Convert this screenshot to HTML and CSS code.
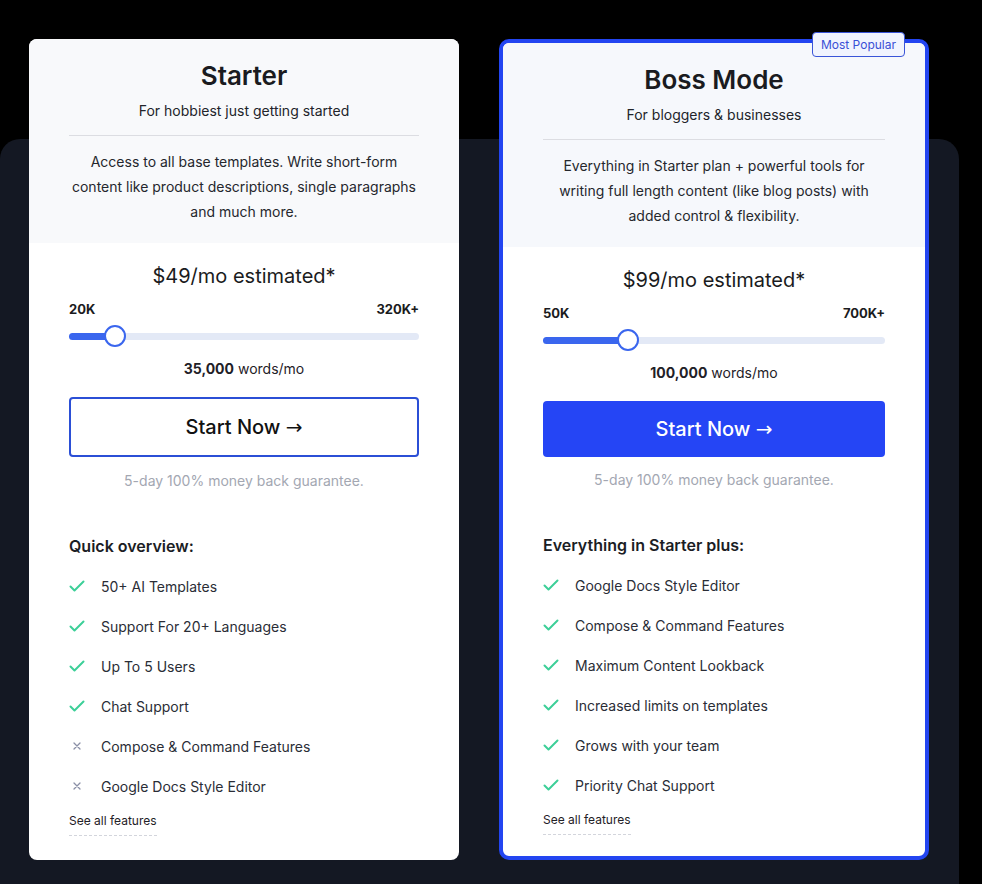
FILE: index.html
```html
<!DOCTYPE html>
<html lang="en">
<head>
    <meta charset="UTF-8">
    <meta name="viewport" content="width=device-width, initial-scale=1.0">
    <title>Pricing</title>
    <link rel="stylesheet" href="styles.css">
</head>
<body>
    <div class="panel">
        <div class="plans">
            <div class="plan">
                <div class="plan-head">
                    <h2>Starter</h2>
                    <p class="plan-sub">For hobbiest just getting started</p>
                    <p class="plan-desc">Access to all base templates. Write short-form content like product descriptions, single paragraphs and much more.</p>
                </div>
                <div class="plan-body">
                    <div class="price">$49/mo estimated*</div>
                    <div class="range-labels"><span>20K</span><span>320K+</span></div>
                    <div class="slider">
                        <div class="slider-track"><div class="slider-fill" style="width: 46px"></div></div>
                        <div class="slider-thumb" style="left: 46px"></div>
                    </div>
                    <div class="words"><b>35,000</b> words/mo</div>
                    <button class="btn btn-outline">Start Now <span class="arrow">&rarr;</span></button>
                    <div class="guarantee">5-day 100% money back guarantee.</div>
                    <h3>Quick overview:</h3>
                    <ul class="features">
                        <li><span class="icon yes"><svg viewBox="0 0 16 16"><polyline points="1.5,8.5 5.5,12.5 14.5,3.5"/></svg></span>50+ AI Templates</li>
                        <li><span class="icon yes"><svg viewBox="0 0 16 16"><polyline points="1.5,8.5 5.5,12.5 14.5,3.5"/></svg></span>Support For 20+ Languages</li>
                        <li><span class="icon yes"><svg viewBox="0 0 16 16"><polyline points="1.5,8.5 5.5,12.5 14.5,3.5"/></svg></span>Up To 5 Users</li>
                        <li><span class="icon yes"><svg viewBox="0 0 16 16"><polyline points="1.5,8.5 5.5,12.5 14.5,3.5"/></svg></span>Chat Support</li>
                        <li><span class="icon no"><svg viewBox="0 0 16 16"><path d="M5 5l6 6M11 5l-6 6"/></svg></span>Compose &amp; Command Features</li>
                        <li><span class="icon no"><svg viewBox="0 0 16 16"><path d="M5 5l6 6M11 5l-6 6"/></svg></span>Google Docs Style Editor</li>
                    </ul>
                    <a class="see-all" href="#">See all features</a>
                </div>
            </div>

            <div class="plan plan-popular">
                <span class="badge">Most Popular</span>
                <div class="plan-head">
                    <h2>Boss Mode</h2>
                    <p class="plan-sub">For bloggers &amp; businesses</p>
                    <p class="plan-desc">Everything in Starter plan + powerful tools for writing full length content (like blog posts) with added control &amp; flexibility.</p>
                </div>
                <div class="plan-body">
                    <div class="price">$99/mo estimated*</div>
                    <div class="range-labels"><span>50K</span><span>700K+</span></div>
                    <div class="slider">
                        <div class="slider-track"><div class="slider-fill" style="width: 85px"></div></div>
                        <div class="slider-thumb" style="left: 85px"></div>
                    </div>
                    <div class="words"><b>100,000</b> words/mo</div>
                    <button class="btn btn-solid">Start Now <span class="arrow">&rarr;</span></button>
                    <div class="guarantee">5-day 100% money back guarantee.</div>
                    <h3>Everything in Starter plus:</h3>
                    <ul class="features">
                        <li><span class="icon yes"><svg viewBox="0 0 16 16"><polyline points="1.5,8.5 5.5,12.5 14.5,3.5"/></svg></span>Google Docs Style Editor</li>
                        <li><span class="icon yes"><svg viewBox="0 0 16 16"><polyline points="1.5,8.5 5.5,12.5 14.5,3.5"/></svg></span>Compose &amp; Command Features</li>
                        <li><span class="icon yes"><svg viewBox="0 0 16 16"><polyline points="1.5,8.5 5.5,12.5 14.5,3.5"/></svg></span>Maximum Content Lookback</li>
                        <li><span class="icon yes"><svg viewBox="0 0 16 16"><polyline points="1.5,8.5 5.5,12.5 14.5,3.5"/></svg></span>Increased limits on templates</li>
                        <li><span class="icon yes"><svg viewBox="0 0 16 16"><polyline points="1.5,8.5 5.5,12.5 14.5,3.5"/></svg></span>Grows with your team</li>
                        <li><span class="icon yes"><svg viewBox="0 0 16 16"><polyline points="1.5,8.5 5.5,12.5 14.5,3.5"/></svg></span>Priority Chat Support</li>
                    </ul>
                    <a class="see-all" href="#">See all features</a>
                </div>
            </div>
        </div>
    </div>
</body>
</html>
```

FILE: styles.css
```css
body {
    font-family: Inter, "Noto Sans", sans-serif;
    background-color: #000;
    margin: 0;
    padding: 0;
    color: #1c1e25;
}

.panel {
    margin-top: 139px;
    width: 959px;
    height: 745px;
    background-color: #141823;
    border-radius: 20px 20px 0 0;
}

.plans {
    display: flex;
    gap: 40px;
    padding-left: 29px;
    position: relative;
    top: -100px;
}

.plan {
    position: relative;
    width: 430px;
    height: 821px;
    box-sizing: border-box;
    background-color: #fff;
    border-radius: 8px;
}

.plan-popular {
    border: 4px solid #2345f1;
    border-radius: 10px;
}

.badge {
    position: absolute;
    top: -11px;
    right: 20px;
    padding: 0 8px;
    height: 23px;
    line-height: 23px;
    font-size: 12px;
    color: #3a4fd6;
    background-color: #f1f4fe;
    border: 1px solid #3a55d8;
    border-radius: 4px;
}

.plan-head {
    background-color: #f8f9fb;
    border-radius: 8px 8px 0 0;
    padding: 21px 40px 19px;
    height: 204px;
    box-sizing: border-box;
    text-align: center;
}

.plan-popular .plan-head {
    background-color: #f6f8fc;
    border-radius: 6px 6px 0 0;
}

.plan-head h2 {
    margin: 0;
    font-size: 26px;
    line-height: 32px;
    font-weight: 600;
    color: #1a1b20;
}

.plan-sub {
    margin: 9px 0 0;
    font-size: 14px;
    line-height: 20px;
    color: #22242a;
    padding-bottom: 14px;
    border-bottom: 1px solid #dcdde2;
}

.plan-desc {
    margin: 13px 0 0;
    font-size: 14px;
    line-height: 25px;
    color: #25272d;
}

.plan-body {
    padding: 19px 40px 0;
}

.price {
    text-align: center;
    font-size: 20px;
    line-height: 28px;
    color: #1a1b20;
}

.range-labels {
    display: flex;
    justify-content: space-between;
    margin-top: 10px;
    font-size: 13px;
    line-height: 18px;
    font-weight: 700;
    color: #1a1b20;
}

.slider {
    position: relative;
    height: 20px;
    margin-top: 8px;
    display: flex;
    align-items: center;
}

.slider-track {
    width: 100%;
    height: 7px;
    border-radius: 4px;
    background-color: #e3e9f6;
}

.slider-fill {
    height: 100%;
    border-radius: 4px;
    background-color: #3a66ee;
}

.slider-thumb {
    position: absolute;
    top: -1px;
    width: 18px;
    height: 18px;
    margin-left: -11px;
    border: 2px solid #3a66ee;
    border-radius: 50%;
    background-color: #fff;
}

.words {
    margin-top: 13px;
    text-align: center;
    font-size: 14px;
    line-height: 20px;
    color: #1f2127;
}

.words b {
    font-weight: 700;
}

.btn {
    display: block;
    width: 100%;
    margin-top: 18px;
    font-family: inherit;
    font-size: 20px;
    font-weight: 500;
    border-radius: 4px;
    cursor: pointer;
}

.btn .arrow {
    font-family: "DejaVu Sans", sans-serif;
    font-weight: 400;
}

.btn-outline {
    height: 60px;
    background-color: #fff;
    border: 2px solid #2b4fd6;
    color: #111;
}

.btn-solid {
    height: 56px;
    background-color: #2545f5;
    border: none;
    color: #fff;
}

.guarantee {
    margin-top: 14px;
    text-align: center;
    font-size: 14px;
    line-height: 20px;
    color: #a3a7b2;
}

.plan-popular .guarantee {
    margin-top: 13px;
}

.plan-body h3 {
    margin: 43px 0 0;
    font-size: 16px;
    line-height: 24px;
    font-weight: 600;
    color: #1b1d24;
}

.features {
    list-style: none;
    margin: 8px 0 0;
    padding: 0;
}

.features li {
    display: flex;
    align-items: center;
    height: 40px;
    font-size: 14px;
    color: #2a2d36;
}

.icon {
    width: 32px;
    display: flex;
    align-items: center;
}

.icon svg {
    width: 16px;
    height: 16px;
    fill: none;
    stroke-linecap: round;
    stroke-linejoin: round;
}

.icon.yes svg {
    stroke: #3ccf98;
    stroke-width: 2;
}

.icon.no svg {
    stroke: #8a8fa6;
    stroke-width: 1.3;
}

.see-all {
    display: inline-block;
    margin-top: 7px;
    padding-bottom: 6px;
    font-size: 12px;
    line-height: 16px;
    color: #1f2127;
    text-decoration: none;
    border-bottom: 1px dashed #d3d5dc;
}
```
